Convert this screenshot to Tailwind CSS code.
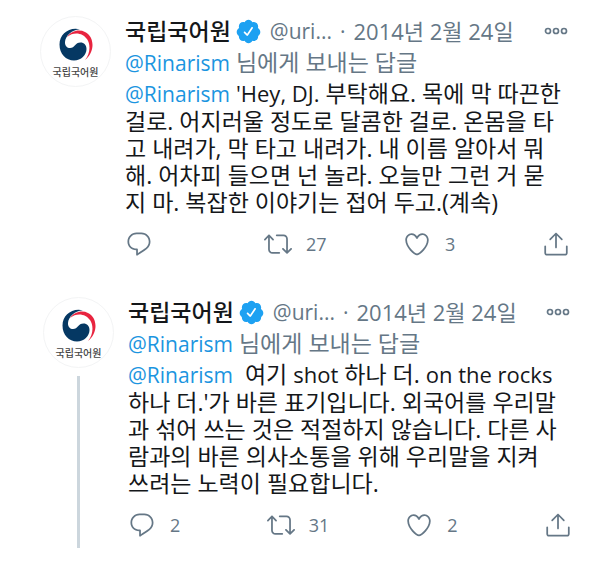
<!DOCTYPE html>
<html lang="ko">
<head>
  <meta charset="UTF-8" />
  <meta name="viewport" content="width=device-width, initial-scale=1.0" />
  <title>국립국어원 트윗</title>
  <script src="https://cdn.jsdelivr.net/npm/@tailwindcss/browser@4"></script>
</head>
<body class="bg-white font-['Open_Sans','Noto_Sans_CJK_KR',sans-serif] text-[23px] text-[#14171a]">

  <!-- 공용 아이콘 -->
  <svg class="hidden" aria-hidden="true">
    <symbol id="verified" viewBox="0 0 24 24">
      <path d="M22.5 12.5c0-1.58-.875-2.95-2.148-3.6.154-.435.238-.905.238-1.4 0-2.21-1.71-3.998-3.818-3.998-.47 0-.92.084-1.336.25C14.818 2.415 13.51 1.5 12 1.5s-2.816.917-3.437 2.25c-.415-.165-.866-.25-1.336-.25-2.11 0-3.818 1.79-3.818 4 0 .494.083.964.237 1.4-1.272.65-2.147 2.018-2.147 3.6 0 1.495.782 2.798 1.942 3.486-.02.17-.032.34-.032.514 0 2.21 1.708 4 3.818 4 .47 0 .92-.086 1.335-.25.62 1.334 1.926 2.25 3.437 2.25 1.512 0 2.818-.916 3.437-2.25.415.163.865.248 1.336.248 2.11 0 3.818-1.79 3.818-4 0-.174-.012-.344-.033-.513 1.158-.687 1.943-1.99 1.943-3.484zm-6.616-3.334l-4.334 6.5c-.145.217-.382.334-.625.334-.143 0-.288-.04-.416-.126l-.115-.094-2.415-2.415c-.293-.293-.293-.768 0-1.06s.768-.294 1.06 0l1.77 1.767 3.825-5.74c.23-.345.696-.436 1.04-.207.346.23.44.696.21 1.04z" />
    </symbol>
    <symbol id="more" viewBox="0 0 28 28">
      <g fill="none" stroke="currentColor" stroke-width="1.7">
        <circle cx="6" cy="13" r="2.5" />
        <circle cx="14" cy="13" r="2.5" />
        <circle cx="22" cy="13" r="2.5" />
      </g>
    </symbol>
    <symbol id="reply" viewBox="0 0 24 24">
      <path d="M14.046 2.242l-4.148-.01h-.002c-4.374 0-7.8 3.427-7.8 7.802 0 4.098 3.186 7.206 7.465 7.37v3.828c0 .108.044.286.12.403.142.225.384.347.632.347.138 0 .277-.038.402-.118.264-.168 6.473-4.14 8.088-5.506 1.902-1.61 3.04-3.97 3.043-6.312v-.017c-.006-4.367-3.43-7.787-7.8-7.788zm3.787 12.972c-1.134.96-4.862 3.405-6.772 4.643V16.67c0-.414-.335-.75-.75-.75h-.396c-3.66 0-6.318-2.476-6.318-5.886 0-3.534 2.768-6.302 6.3-6.302l4.147.01h.002c3.532 0 6.3 2.766 6.302 6.296-.003 1.91-.942 3.844-2.514 5.176z" />
    </symbol>
    <symbol id="retweet" viewBox="0 0 24 24">
      <path d="M23.77 15.67c-.292-.293-.767-.293-1.06 0l-2.22 2.22V7.65c0-2.068-1.683-3.75-3.75-3.75h-5.85c-.414 0-.75.336-.75.75s.336.75.75.75h5.85c1.24 0 2.25 1.01 2.25 2.25v10.24l-2.22-2.22c-.293-.293-.768-.293-1.06 0s-.294.768 0 1.06l3.5 3.5c.145.147.337.22.53.22s.383-.072.53-.22l3.5-3.5c.294-.292.294-.767 0-1.06zm-10.66 3.28H7.26c-1.24 0-2.25-1.01-2.25-2.25V6.46l2.22 2.22c.148.147.34.22.532.22s.384-.073.53-.22c.293-.293.293-.768 0-1.06l-3.5-3.5c-.293-.294-.768-.294-1.06 0l-3.5 3.5c-.294.292-.294.767 0 1.06s.767.293 1.06 0l2.22-2.22V16.7c0 2.068 1.683 3.75 3.75 3.75h5.85c.414 0 .75-.336.75-.75s-.337-.75-.75-.75z" />
    </symbol>
    <symbol id="like" viewBox="0 0 24 24">
      <path d="M12 21.638h-.014C9.403 21.59 1.95 14.856 1.95 8.478c0-3.064 2.525-5.754 5.403-5.754 2.29 0 3.83 1.58 4.646 2.73.814-1.148 2.354-2.73 4.645-2.73 2.88 0 5.404 2.69 5.404 5.755 0 6.376-7.454 13.11-10.037 13.157H12zM7.354 4.225c-2.08 0-3.903 1.988-3.903 4.255 0 5.74 7.034 11.596 8.55 11.658 1.518-.062 8.55-5.917 8.55-11.658 0-2.267-1.823-4.255-3.903-4.255-2.528 0-3.94 2.936-3.952 2.965-.23.562-1.156.562-1.387 0-.014-.03-1.425-2.965-3.954-2.965z" />
    </symbol>
    <symbol id="share" viewBox="0 0 24 24">
      <path d="M17.53 7.47l-5-5c-.293-.293-.768-.293-1.06 0l-5 5c-.294.293-.294.768 0 1.06s.767.294 1.06 0l3.72-3.72V15c0 .414.336.75.75.75s.75-.336.75-.75V4.81l3.72 3.72c.146.147.338.22.53.22s.384-.072.53-.22c.293-.293.293-.767 0-1.06z" />
      <path d="M19.708 21.944H4.292C3.028 21.944 2 20.916 2 19.652V14c0-.414.336-.75.75-.75s.75.336.75.75v5.652c0 .437.355.792.792.792h15.416c.437 0 .792-.355.792-.792V14c0-.414.336-.75.75-.75s.75.336.75.75v5.652c0 1.264-1.028 2.292-2.292 2.292z" />
    </symbol>
    <symbol id="taegeuk" viewBox="0 0 34 34">
      <path fill="#e8243f" d="M8 9C12 3 20 1 26 4c10 5 10 20 0 28 5-6 6-15 2-21C24 5 15 3 8 9z" />
      <path fill="#053863" d="M21 1.2C10-1.5.5 6 .5 16.5c0 9.500 6.500 16 14.500 16 7 0 12.500-5.500 12.500-11.500 0-4-2.500-6.500-6-6.500-5.500 0-5.500 5.500-10.500 5.500-3 0-5.200-2.500-5-6C6.500 8 12 2 21 1.200z" />
    </symbol>
  </svg>

  <main>
    <article class="flex gap-[14px] pt-4 pr-[39px] pl-10">
      <a href="#" class="flex size-[71px] shrink-0 flex-col items-center rounded-full border border-[#f3f4f5] pt-[11px]">
        <svg class="size-[34px]" aria-hidden="true"><use href="#taegeuk" /></svg>
        <span class="mt-[3px] text-[10px] leading-[14px] font-medium whitespace-nowrap text-[#444]">국립국어원</span>
      </a>
      <div class="min-w-0 flex-1">
        <header class="flex items-center leading-[31px] whitespace-nowrap text-[#657786]">
          <a href="#" class="font-medium text-[#14171a]">국립국어원</a>
          <svg class="ml-1 size-[27px] fill-[#1da1f2]" role="img" aria-label="인증된 계정"><use href="#verified" /></svg>
          <span class="ml-2 text-[21px]">@uri...</span>
          <span class="mx-2 text-[21px]">·</span>
          <a href="#" class="text-[22px]">2014년 2월 24일</a>
          <button type="button" aria-label="더 보기" class="ml-auto"><svg class="size-7"><use href="#more" /></svg></button>
        </header>
        <p class="leading-[31px] text-[#657786]"><a href="#" class="text-[21px] text-[#1b95e0]">@Rinarism</a> 님에게 보내는 답글</p>
        <p class="pt-px leading-[27px] whitespace-nowrap"><a href="#" class="text-[21px] text-[#1b95e0]">@Rinarism</a> <span class="text-[22px]">'Hey, DJ.</span> 부탁해요. 목에 막 따끈한<br />걸로. 어지러울 정도로 달콤한 걸로. 온몸을 타<br />고 내려가, 막 타고 내려가. 내 이름 알아서 뭐<br />해. 어차피 들으면 넌 놀라. 오늘만 그런 거 묻<br />지 마. 복잡한 이야기는 접어 두고.(계속)</p>
        <footer class="mt-[14px] flex text-[18px] leading-7 text-[#657786]">
          <button type="button" aria-label="답글" class="flex flex-1 gap-[14px]"><svg class="size-7 fill-current"><use href="#reply" /></svg></button>
          <button type="button" aria-label="리트윗 27" class="flex flex-1 gap-[14px]"><svg class="size-7 fill-current"><use href="#retweet" /></svg>27</button>
          <button type="button" aria-label="마음에 들어요 3" class="flex flex-1 gap-[14px]"><svg class="size-7 fill-current"><use href="#like" /></svg>3</button>
          <button type="button" aria-label="공유"><svg class="size-7 fill-current"><use href="#share" /></svg></button>
        </footer>
      </div>
    </article>

    <article class="mt-[39px] flex gap-[14px] pr-[37px] pl-[43px]">
      <div class="flex shrink-0 flex-col items-center">
        <a href="#" class="flex size-[71px] shrink-0 flex-col items-center rounded-full border border-[#f3f4f5] pt-[11px]">
          <svg class="size-[34px]" aria-hidden="true"><use href="#taegeuk" /></svg>
          <span class="mt-[3px] text-[10px] leading-[14px] font-medium whitespace-nowrap text-[#444]">국립국어원</span>
        </a>
        <div class="mt-2 w-[3px] flex-1 bg-[#ccd6dd]"></div>
      </div>
      <div class="min-w-0 flex-1 pb-[9px]">
        <header class="flex items-center leading-[31px] whitespace-nowrap text-[#657786]">
          <a href="#" class="font-medium text-[#14171a]">국립국어원</a>
          <svg class="ml-1 size-[27px] fill-[#1da1f2]" role="img" aria-label="인증된 계정"><use href="#verified" /></svg>
          <span class="ml-2 text-[21px]">@uri...</span>
          <span class="mx-2 text-[21px]">·</span>
          <a href="#" class="text-[22px]">2014년 2월 24일</a>
          <button type="button" aria-label="더 보기" class="ml-auto"><svg class="size-7"><use href="#more" /></svg></button>
        </header>
        <p class="leading-[31px] text-[#657786]"><a href="#" class="text-[21px] text-[#1b95e0]">@Rinarism</a> 님에게 보내는 답글</p>
        <p class="pt-px leading-[27px] whitespace-nowrap"><a href="#" class="text-[21px] text-[#1b95e0]">@Rinarism</a> &nbsp;여기 <span class="text-[22px]">shot</span> 하나 더. <span class="text-[22px]">on the rocks</span><br />하나 더.'가 바른 표기입니다. 외국어를 우리말<br />과 섞어 쓰는 것은 적절하지 않습니다. 다른 사<br />람과의 바른 의사소통을 위해 우리말을 지켜<br />쓰려는 노력이 필요합니다.</p>
        <footer class="mt-[14px] flex text-[18px] leading-7 text-[#657786]">
          <button type="button" aria-label="답글 2" class="flex flex-1 gap-[14px]"><svg class="size-7 fill-current"><use href="#reply" /></svg>2</button>
          <button type="button" aria-label="리트윗 31" class="flex flex-1 gap-[14px]"><svg class="size-7 fill-current"><use href="#retweet" /></svg>31</button>
          <button type="button" aria-label="마음에 들어요 2" class="flex flex-1 gap-[14px]"><svg class="size-7 fill-current"><use href="#like" /></svg>2</button>
          <button type="button" aria-label="공유"><svg class="size-7 fill-current"><use href="#share" /></svg></button>
        </footer>
      </div>
    </article>
  </main>
</body>
</html>
